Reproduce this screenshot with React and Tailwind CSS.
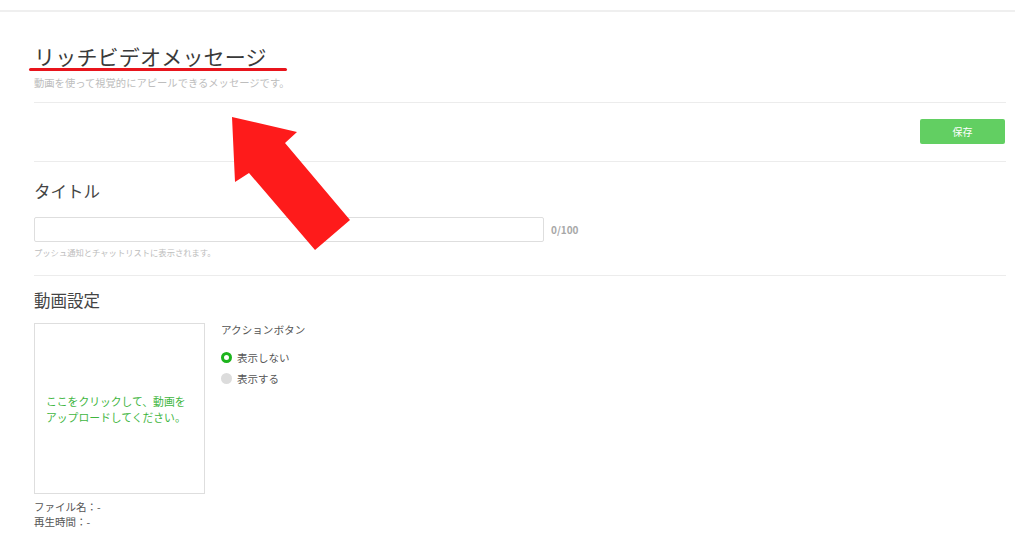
import React from 'react';

const font = { fontFamily: '"Noto Sans CJK JP", "Noto Sans", sans-serif' };

function Arrow() {
    return (
        <svg className="absolute left-0 top-0 pointer-events-none" width="1024" height="538" viewBox="0 0 1024 538">
            <polygon points="232,117 297,132 285,143 350,220 315,250 249,173 235,182" fill="#fe1b1b" />
        </svg>
    );
}

function Radio({ checked, label }) {
    return (
        <div className="flex items-center h-[21px]">
            {checked ? (
                <span className="w-[11px] h-[11px] rounded-full border-[3px] border-[#1db41d] bg-white"></span>
            ) : (
                <span className="w-[11px] h-[11px] rounded-full bg-[#dcdcdc]"></span>
            )}
            <span className="ml-[5px] text-[10.5px] text-[#555]">{label}</span>
        </div>
    );
}

export default function App() {
    return (
        <div className="relative w-[1024px] h-[538px] bg-white overflow-hidden" style={font}>
            <div className="h-[10px]"></div>
            <div className="w-[1015px] border-t-2 border-[#efefef]"></div>

            <div className="ml-[34px] w-[972px]">
                {/* Header */}
                <h1 className="mt-[32px] text-[21px] leading-[24px] text-[#3a3a3a] tracking-[0.2px]">リッチビデオメッセージ</h1>
                <p className="mt-[8px] text-[10.3px] leading-[14px] text-[#bdbdbd]">動画を使って視覚的にアピールできるメッセージです。</p>
                <div className="mt-[12px] border-t border-[#ececec]"></div>

                <div className="flex justify-end pt-[16px] pb-[17px]">
                    <button className="w-[85px] h-[25px] rounded-[2px] bg-[#62cf62] text-white text-[10px] mr-[1px]">保存</button>
                </div>
                <div className="border-t border-[#ececec]"></div>

                {/* Title */}
                <h2 className="mt-[19px] text-[16.5px] leading-[20px] text-[#444]">タイトル</h2>
                <div className="mt-[16px] flex items-center">
                    <div className="w-[510px] h-[25px] border border-[#dedede] rounded-[2px] bg-white"></div>
                    <span className="ml-[7px] text-[10px] text-[#a8a8a8] font-semibold">0/100</span>
                </div>
                <p className="mt-[4px] text-[8.3px] leading-[12px] text-[#bdbdbd]">プッシュ通知とチャットリストに表示されます。</p>
                <div className="mt-[17px] border-t border-[#ececec]"></div>

                {/* Video */}
                <h2 className="mt-[14px] text-[16.5px] leading-[20px] text-[#444]">動画設定</h2>
                <div className="mt-[13px] flex items-start">
                    <div>
                        <div className="w-[171px] h-[171px] border border-[#dedede] flex items-center">
                            <p className="pl-[11px] text-[10.8px] leading-[16px] text-[#3fb63f]">
                                ここをクリックして、動画を<br />アップロードしてください。
                            </p>
                        </div>
                        <div className="mt-[5px] text-[10.5px] leading-[15px] text-[#555]">
                            <p>ファイル名：-</p>
                            <p>再生時間：-</p>
                        </div>
                    </div>
                    <div className="ml-[16px]">
                        <p className="text-[10.6px] leading-[14px] text-[#555]">アクションボタン</p>
                        <div className="mt-[10px]">
                            <Radio checked label="表示しない" />
                            <Radio label="表示する" />
                        </div>
                    </div>
                </div>
            </div>

            {/* annotations */}
            <div className="absolute left-[29px] top-[68px] w-[258px] h-[3px] rounded-full bg-[#e8141c]"></div>
            <Arrow />
        </div>
    );
}
